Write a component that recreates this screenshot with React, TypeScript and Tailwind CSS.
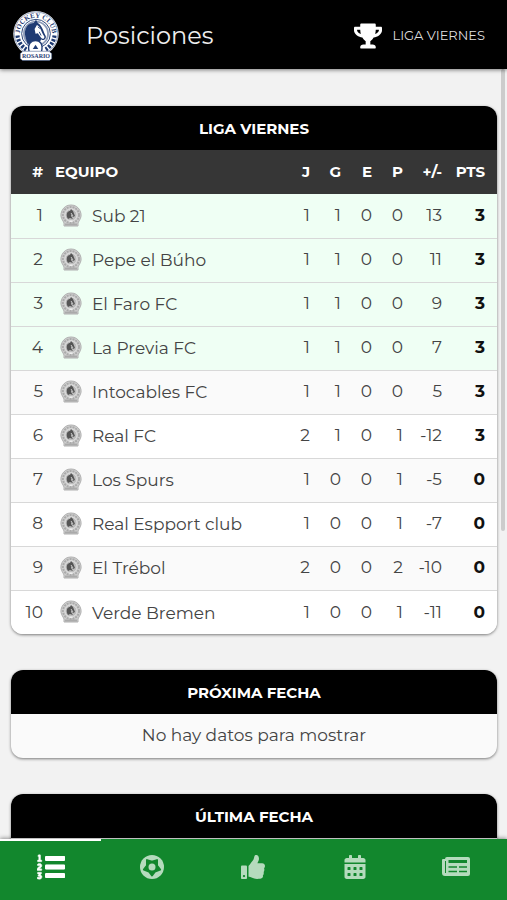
import { FaCalendarAlt, FaListOl, FaThumbsUp, FaTrophy } from "react-icons/fa";

const teams = [
  { name: "Sub 21", j: 1, g: 1, e: 0, p: 0, diff: 13, pts: 3 },
  { name: "Pepe el Búho", j: 1, g: 1, e: 0, p: 0, diff: 11, pts: 3 },
  { name: "El Faro FC", j: 1, g: 1, e: 0, p: 0, diff: 9, pts: 3 },
  { name: "La Previa FC", j: 1, g: 1, e: 0, p: 0, diff: 7, pts: 3 },
  { name: "Intocables FC", j: 1, g: 1, e: 0, p: 0, diff: 5, pts: 3 },
  { name: "Real FC", j: 2, g: 1, e: 0, p: 1, diff: -12, pts: 3 },
  { name: "Los Spurs", j: 1, g: 0, e: 0, p: 1, diff: -5, pts: 0 },
  { name: "Real Espport club", j: 1, g: 0, e: 0, p: 1, diff: -7, pts: 0 },
  { name: "El Trébol", j: 2, g: 0, e: 0, p: 2, diff: -10, pts: 0 },
  { name: "Verde Bremen", j: 1, g: 0, e: 0, p: 1, diff: -11, pts: 0 },
];

function ClubCrest() {
  return (
    <svg viewBox="0 0 100 108" className="h-[50px] w-12" aria-hidden="true">
      <defs>
        <path id="crest-arc" d="M19 66A35 35 0 1 1 81 66" />
      </defs>
      <circle cx="50" cy="49" r="49" fill="#fff" />
      <circle cx="50" cy="49" r="47" fill="none" stroke="#1f3b73" strokeWidth="1" />
      <text fill="#1f3b73" fontSize="15" fontWeight="700" fontFamily="Liberation Serif, serif" textAnchor="middle">
        <textPath href="#crest-arc" startOffset="50%">JOCKEY CLUB</textPath>
      </text>
      <path d="M10 53A40 40 0 0 0 29 83M90 53A40 40 0 0 1 71 83" fill="none" stroke="#1f3b73" strokeWidth="9" strokeDasharray="5 3" />
      <circle cx="50" cy="49" r="31" fill="#fff" stroke="#1f3b73" strokeWidth="2" />
      <circle cx="50" cy="49" r="26" fill="none" stroke="#8c9bb8" strokeWidth="4" />
      <path d="M27 56C23 37 33 26 45 26L50 19L54 26C63 31 65 42 71 54C73 60 66 66 61 61L57 72L43 65L32 72Z" fill="#1f3b73" />
      <path d="M52 30C60 34 61 44 68 55C69 60 64 62 61 58L54 48L49 49L47 39Z" fill="#fff" />
      <path d="M54 34L58 38M57 45L61 53M46 53C47 60 53 62 56 68" fill="none" stroke="#1f3b73" strokeWidth="2" />
      <path d="M35 87C31 70 40 64 49 64S66 70 62 87" fill="#fff" stroke="#1f3b73" strokeWidth="3" />
      <path d="M49 73L55 82H43Z" fill="#1f3b73" />
      <path d="M22 87H78L84 92V103L79 107H21L16 103V92Z" fill="#fff" stroke="#1f3b73" strokeWidth="1" />
      <text x="50" y="102" fill="#1f3b73" fontSize="13" fontWeight="700" fontFamily="Liberation Serif, serif" textAnchor="middle">ROSARIO</text>
    </svg>
  );
}

// Simplified grey crest for teams without their own
function TeamCrest() {
  return (
    <svg viewBox="0 0 22 24" className="h-6 w-[22px] shrink-0" aria-hidden="true">
      <path d="M11 1A10 10 0 0 1 19 17L18 19V22H4V19L3 17A10 10 0 0 1 11 1Z" fill="#cfcfcf" stroke="#b0b0b0" />
      <circle cx="11" cy="11" r="8" fill="none" stroke="#aaa" strokeWidth="2" strokeDasharray="2 1" />
      <circle cx="11" cy="11" r="6" fill="#bdbdbd" stroke="#dedede" />
      <path d="M7 13C6 9 8 7 10 7L11 5L13 7L15 12L13 13L11 10L11 12L13 15L10 14L8 15Z" fill="#555" />
      <path d="M11 9L13 12" stroke="#ccc" />
      <path d="M9 18L11 16L13 18" fill="#eee" />
      <path d="M5 20.5H17" stroke="#aaa" strokeWidth="2" />
    </svg>
  );
}

// Numbered list with heavier bars than the stock icon
function RankingIcon() {
  return (
    <svg viewBox="0 0 28 28" className="size-7" fill="currentColor" aria-hidden="true">
      <FaListOl size={28} strokeWidth={8} stroke="currentColor" />
      <rect x="8" y="3" width="20" height="5" rx="1" />
      <rect x="8" y="11.5" width="20" height="5" rx="1" />
      <rect x="8" y="20" width="20" height="5" rx="1" />
    </svg>
  );
}

function BallIcon() {
  return (
    <svg viewBox="0 0 24 24" className="size-6" aria-hidden="true">
      <circle cx="12" cy="12" r="12" fill="currentColor" />
      <path
        d="M12 20.5L9 16.5L3.9 14.6L7 10.5L7 5.1L12 6.8L17 5.1L17 10.5L20.1 14.6L15 16.5Z"
        fill="#12872d"
        stroke="#12872d"
        strokeWidth="2"
        strokeLinejoin="round"
      />
      <circle cx="12" cy="12" r="3.5" fill="currentColor" />
    </svg>
  );
}

function NewsIcon() {
  return (
    <svg viewBox="0 0 28 20" className="h-5 w-7" aria-hidden="true">
      <path d="M5 0H26A2 2 0 0 1 28 2V17A2 2 0 0 1 26 19H3A3 3 0 0 1 0 16V3A1 1 0 0 1 1 2H3A2 2 0 0 1 5 0Z" fill="currentColor" />
      <path d="M3.5 4V16" stroke="#12872d" strokeWidth="1" />
      <path d="M6.5 4.5H25" stroke="#12872d" strokeWidth="3" />
      <path d="M6.5 10H15M17 10H25M6.5 14.5H15M17 14.5H25" stroke="#12872d" strokeWidth="1.5" />
    </svg>
  );
}

const tabs = [
  { label: "Posiciones", icon: <RankingIcon /> },
  { label: "Partidos", icon: <BallIcon /> },
  { label: "Fair play", icon: <FaThumbsUp className="size-6" /> },
  { label: "Calendario", icon: <FaCalendarAlt className="size-6" /> },
  { label: "Noticias", icon: <NewsIcon /> },
];

function CardTitle({ children }: { children: string }) {
  return (
    <h2 className="flex h-11 items-center justify-center bg-black pt-0.5 text-[15px] font-bold text-white">{children}</h2>
  );
}

export default function App() {
  return (
    <div className="flex h-screen flex-col overflow-hidden bg-[#f2f2f2] font-['Montserrat','Inter',sans-serif] text-[#444]">
      <header className="z-10 flex h-[69px] shrink-0 items-center bg-black pt-0.5 pr-[22px] pl-3 text-white shadow-[0_1px_4px_rgba(0,0,0,0.5)]">
        <ClubCrest />
        <h1 className="ml-[26px] text-2xl text-[#eee]">Posiciones</h1>
        <button className="ml-auto flex items-center gap-2.5 text-[13px] text-[#ddd]">
          <FaTrophy className="size-7 text-white" />
          LIGA VIERNES
        </button>
      </header>

      <div className="relative min-h-0 flex-1">
        <main className="flex h-full flex-col gap-9 overflow-y-auto pt-[37px] pr-2.5 pb-6 pl-[11px] [scrollbar-width:none]">
          <section className="shrink-0 overflow-hidden rounded-xl bg-white shadow-[0_1px_3px_rgba(0,0,0,0.5)]">
            <CardTitle>LIGA VIERNES</CardTitle>
            <table className="w-full table-fixed">
              <thead className="bg-[#363636] text-[15px] text-white">
                <tr className="h-11 text-right">
                  <th className="w-8">#</th>
                  <th className="pl-3 text-left">EQUIPO</th>
                  <th className="w-[31px]">J</th>
                  <th className="w-[31px]">G</th>
                  <th className="w-[31px]">E</th>
                  <th className="w-[31px]">P</th>
                  <th className="w-[39px]">+/-</th>
                  <th className="w-[55px] pr-3">PTS</th>
                </tr>
              </thead>
              <tbody className="text-right text-[17px]">
                {teams.map((team, i) => (
                  <tr
                    key={team.name}
                    className={`h-11 border-b border-[#d8d8d8] last:border-b-0 ${
                      i < 4 ? "bg-[#effff4]" : i % 2 === 0 ? "bg-[#fafafa]" : "bg-white"
                    }`}
                  >
                    <td>{i + 1}</td>
                    <td className="pl-[17px] text-left">
                      <div className="flex items-center gap-2.5 whitespace-nowrap">
                        <TeamCrest />
                        <span className="pt-0.5">{team.name}</span>
                      </div>
                    </td>
                    <td>{team.j}</td>
                    <td>{team.g}</td>
                    <td>{team.e}</td>
                    <td>{team.p}</td>
                    <td>{team.diff}</td>
                    <td className="pr-3 font-bold text-[#111]">{team.pts}</td>
                  </tr>
                ))}
              </tbody>
            </table>
          </section>

          <section className="shrink-0 overflow-hidden rounded-xl bg-[#fafafa] shadow-[0_1px_3px_rgba(0,0,0,0.5)]">
            <CardTitle>PRÓXIMA FECHA</CardTitle>
            <p className="flex h-11 items-center justify-center text-[17px]">No hay datos para mostrar</p>
          </section>

          <section className="shrink-0 overflow-hidden rounded-xl bg-[#fafafa] shadow-[0_1px_3px_rgba(0,0,0,0.5)]">
            <CardTitle>ÚLTIMA FECHA</CardTitle>
            <div className="h-11" />
          </section>
        </main>
        <div className="absolute top-0 right-0.5 h-3/5 w-1 rounded-full bg-[#ccc]" />
      </div>

      <nav className="z-10 grid h-[61px] shrink-0 grid-cols-5 bg-[#12872d] shadow-[0_-1px_4px_rgba(0,0,0,0.4)]">
        {tabs.map((tab, i) => (
          <button
            key={tab.label}
            aria-label={tab.label}
            className={`flex items-center justify-center border-t-2 pb-2 ${
              i === 0 ? "border-white text-white" : "border-transparent text-[#b5dbbd]"
            }`}
          >
            {tab.icon}
          </button>
        ))}
      </nav>
    </div>
  );
}
